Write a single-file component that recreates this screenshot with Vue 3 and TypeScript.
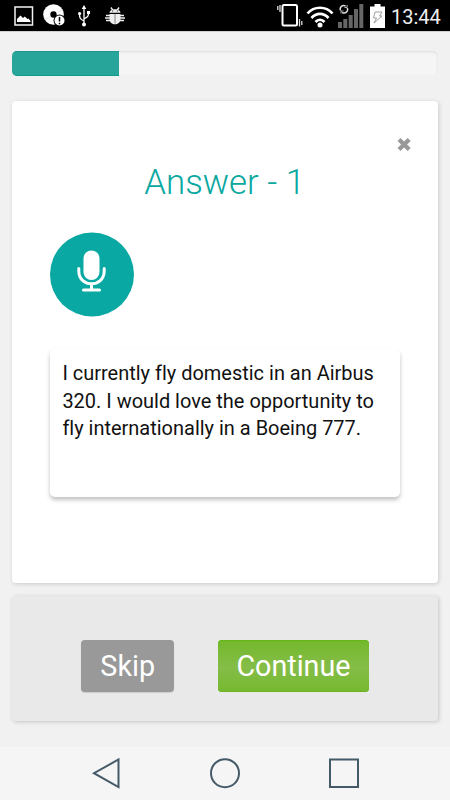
<script setup lang="ts">
import { ref } from 'vue'

const progress = ref(25)
const answerNumber = ref(1)
const answer = ref<string[]>([
  'I currently fly domestic in an Airbus',
  '320. I would love the opportunity to',
  'fly internationally in a Boeing 777.',
])
</script>

<template>
  <div class="screen">
    <header class="status">
      <div class="notices">
        <svg class="picture" width="20" height="20" viewBox="0 0 20 20">
          <path d="M1 1h17.500v18H1z" fill="none" stroke="#f4f4f4" stroke-width="1.500" />
          <path d="M3 16v-3l3.500-3.500L9 12l1.800-1.400L13.500 13l1-.5 2 2.500v1z" fill="#fff" />
        </svg>
        <svg class="disc" width="22" height="23" viewBox="0 0 22 23">
          <circle cx="10.500" cy="10.500" r="10.300" fill="#fff" />
          <circle cx="10.500" cy="10.500" r="3.200" fill="#000" />
          <path d="M1.500 15.500L8 12M19.500 5.500L13 9" stroke="#ddd" stroke-width=".8" />
          <circle cx="16.500" cy="16.500" r="6" fill="#000" />
          <circle cx="16.500" cy="16.500" r="5" fill="#fff" />
          <path d="M16.500 13v4.500M16.500 18.700v1.500" stroke="#000" stroke-width="1.500" />
        </svg>
        <svg class="usb" width="12" height="22" viewBox="0 0 12 22">
          <path d="M6 3v16M6 16c-4-2-4.500-3-4.500-7M6 14c4-2 4.500-3 4.500-6" fill="none" stroke="#fff" stroke-width="1.300" />
          <path d="M6 0l2.300 4H3.700zM9 6h3v3H9z" fill="#fff" />
          <circle cx="1.600" cy="8.500" r="1.600" fill="#fff" />
          <circle cx="6" cy="19.500" r="2" fill="#fff" />
        </svg>
        <svg class="bug" width="20" height="18" viewBox="0 0 20 18">
          <path d="M4.500 5.800C4.500 1 15.500 1 15.500 5.800zM4.500 7h11v5c0 7-11 7-11 0z" fill="#eee" />
          <path d="M6 .5l2 3M14 .5l-2 3M5 8.500H1M5 11H0M5 13.500H1M15 8.500h4M15 11h5M15 13.500h4" stroke="#eee" stroke-width="1.400" />
          <path d="M10 7v9.500" stroke="#777" stroke-width=".9" />
          <path d="M7 4h1.200M11.800 4H13" stroke="#333" stroke-width="1" />
        </svg>
      </div>
      <div class="system">
        <svg class="vibrate" width="26" height="24" viewBox="0 0 26 24">
          <rect x="5.500" y="1" width="14.500" height="20.500" rx="1.500" fill="none" stroke="#fff" stroke-width="2" />
          <path d="M3 1v7M.8 2v4M22.500 15v7.500M24.800 17v4" stroke="#ddd" stroke-width="1.300" />
        </svg>
        <svg class="wifi" width="28" height="22" viewBox="0 0 28 22">
          <path d="M1.500 7.500C8-.2 20-.2 26.500 7.500M5.500 12c4.700-5.400 12.300-5.400 17 0M9.500 16c2.700-3 6.300-3 9 0" fill="none" stroke="#fff" stroke-width="2.700" />
          <circle cx="14" cy="19" r="2.500" fill="#fff" />
        </svg>
        <svg class="signal" width="26" height="24" viewBox="0 0 26 24">
          <path d="M0 18h4v6H0zM5.300 15h4v9h-4zM10.700 11h4v13h-4zM16 5h4v19h-4zM21.300 0h4v24h-4z" fill="#666" />
          <path d="M2.600 6.500a3.400 3.400 0 0 1 5-4.300M9.200 4a3.400 3.400 0 0 1-5 4.300" fill="none" stroke="#ddd" stroke-width="1.500" />
          <path d="M6.500 3.500h2.600V1M5.500 7H3v2.500" fill="none" stroke="#ddd" stroke-width=".8" />
        </svg>
        <svg class="battery" width="16" height="24" viewBox="0 0 16 24">
          <path d="M4.500 0h6v2.500H15V24H0V2.500h4.500z" fill="#fff" />
          <path d="M5 8h7l-2.500 4H12L4 19l2.500-5H3.500z" fill="none" stroke="#888" stroke-width=".8" />
        </svg>
        <time>13:44</time>
      </div>
    </header>

    <main class="content">
      <div class="progress"><div class="progress-fill" :style="{ width: progress + '%' }"></div></div>

      <section class="card">
        <button class="close" aria-label="Close">
          <svg width="16" height="15" viewBox="0 0 16 15"><path d="M3 2.400l10.200 10.200M13.200 2.400L3 12.600" stroke="#999" stroke-width="4.200" /></svg>
        </button>
        <h1>Answer - {{ answerNumber }}</h1>
        <button class="record" aria-label="Record answer">
          <svg width="84" height="84" viewBox="0 0 84 84">
            <circle cx="42" cy="41.500" r="42" fill="#09a8a3" />
            <rect x="33.500" y="17.500" width="16" height="29.500" rx="8" fill="#fff" />
            <path d="M28.800 35.500v2.500c0 17 25.400 17 25.400 0v-2.500M41.500 51v6M33.500 57h16" fill="none" stroke="#fff" stroke-width="3" stroke-linecap="round" />
          </svg>
        </button>
        <div class="answer"><p v-for="line in answer" :key="line">{{ line }}</p></div>
      </section>

      <footer class="actions">
        <button class="btn skip">Skip</button>
        <button class="btn continue">Continue</button>
      </footer>
    </main>

    <nav class="navigation">
      <svg width="30" height="32" viewBox="0 0 30 32"><path d="M27.500 2.500v27.500L3 16.200z" /></svg>
      <svg width="30" height="32" viewBox="0 0 30 32"><circle cx="15" cy="16.200" r="14" /></svg>
      <svg width="30" height="32" viewBox="0 0 30 32"><path d="M1 2.500h28v27.500H1z" /></svg>
    </nav>
  </div>
</template>

<style>
body { margin: 0; }
</style>

<style scoped>
* { box-sizing: border-box; }
.screen { width: 450px; height: 800px; display: flex; flex-direction: column; overflow: hidden; background: #f1f1f1; font-family: Roboto, "Liberation Sans", sans-serif; font-variant-ligatures: none; }
.status { height: 31px; flex: none; display: flex; justify-content: space-between; background: #000; padding: 0 8px 0 14px; box-shadow: 0 1px #cfcfcf; }
.notices, .system { display: flex; align-items: center; }
.disc { margin-left: 9px; }
.usb { margin-left: 13px; }
.bug { margin-left: 15px; }
.vibrate { margin-right: 1px; }
.wifi { margin: 3px 0 0 2px; }
.signal { margin-left: 4px; }
.battery { margin-left: 6px; }
time { width: 51px; margin: 2px 0 0 5px; color: #eee; font-size: 20px; line-height: 28px; white-space: nowrap; }
.content { flex: 1; padding: 20.400px 12px 0 12.400px; }
.progress { height: 25px; overflow: hidden; border-radius: 5px; background: #f5f5f5; box-shadow: inset 0 1px 3px rgba(0, 0, 0, .1); }
.progress-fill { height: 100%; border-radius: 4px 0 0 4px; background: #27a59b; box-shadow: inset 0 -1px #0f9a90, inset 0 1px #20978d; }
.card { height: 481.600px; margin-top: 24.600px; padding: 35px 37.600px 0; display: flex; flex-direction: column; border-radius: 4px; background: #fff; box-shadow: 1px 1px 4px rgba(0, 0, 0, .16); }
button { padding: 0; border: 0; font-family: inherit; }
.close { align-self: flex-end; width: 16px; height: 17px; margin-right: -12px; background: none; }
.close svg { display: block; }
h1 { height: 48px; margin: 5px 1px 0 0; color: #08a79f; text-align: center; font-size: 34.800px; font-weight: 300; line-height: 48px; }
.record { width: 84px; height: 84px; margin-top: 27px; background: none; }
.record svg { display: block; overflow: visible; }
.answer { height: 148px; width: 350px; margin-top: 32.400px; padding: 11px 12.400px; border-radius: 5px; background: #fff; box-shadow: 0 3px 4px rgba(0, 0, 0, .24); color: #111; font-size: 19.980px; line-height: 27.400px; }
p { margin: 0; white-space: nowrap; }
.actions { height: 125px; margin-top: 13.400px; padding-top: 44px; display: flex; justify-content: center; gap: 44px; border-radius: 4px; background: #e9e9e9; box-shadow: 1px 1px 4px rgba(0, 0, 0, .18); }
.btn { height: 52px; border-radius: 4px; color: #fff; font-size: 28.700px; line-height: 50px; box-shadow: 0 1px 1px rgba(0, 0, 0, .12); }
.skip { width: 92.500px; background: #999; }
.continue { width: 151px; background: linear-gradient(#72b82b, #85bd48 52%, #75b92f); box-shadow: inset 0 1px #65b619, inset 0 -1px #6bb421; }
.navigation { height: 53px; flex: none; display: flex; justify-content: center; gap: 89px; padding-top: 10px; background: #f5f5f5; }
.navigation svg { fill: none; stroke: #455a68; stroke-width: 2; }
</style>
